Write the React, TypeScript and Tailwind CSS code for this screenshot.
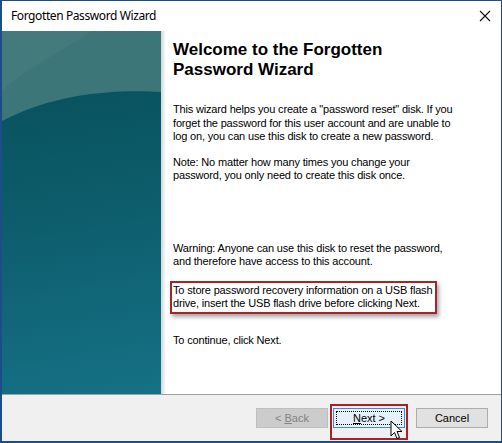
import React from "react";

const body =
  "font-['Liberation_Sans',Arial,sans-serif] text-[11px] tracking-[-0.17px] leading-[13.5px] text-black whitespace-nowrap";

function Panel() {
  return (
    <div className="relative w-[159px] h-[363px] shrink-0 bg-[linear-gradient(170deg,#08505b_10%,#0d5d6c_50%,#157185_100%)]">
      <svg className="absolute left-0 top-0" width="159" height="92" viewBox="0 0 159 92">
        <path d="M0,0 L159,0 L159,61 C130,59 60,58 0,90 Z" fill="#3d7678" />
        <path d="M0,0 L90,0 C60,20 20,40 0,60 Z" fill="#4b8283" opacity="0.45" />
      </svg>
    </div>
  );
}

function Btn({ children, className = "" }: { children: React.ReactNode; className?: string }) {
  return (
    <div
      className={`w-[72px] h-[20px] flex items-center justify-center border font-['Liberation_Sans',Arial,sans-serif] text-[11px] ${className}`}
    >
      {children}
    </div>
  );
}

export default function App() {
  return (
    <div className="w-[502px] h-[443px] bg-[#1d4d89] border-l-2 border-r border-t border-b-2 border-[#1d4d89] flex flex-col overflow-hidden">
      {/* title bar */}
      <div className="h-[30px] bg-white flex items-center justify-between pl-[9px] pr-[10px] shrink-0">
        <span className="font-['Noto_Sans',sans-serif] text-[12px] tracking-[-0.4px] text-black">
          Forgotten Password Wizard
        </span>
        <svg width="12" height="12" viewBox="0 0 12 12">
          <path d="M1,1 L11,11 M11,1 L1,11" stroke="#111" strokeWidth="1.1" />
        </svg>
      </div>
      {/* main */}
      <div className="h-[363px] flex bg-white shrink-0">
        <Panel />
        <div className="w-[5px] shrink-0 bg-gradient-to-r from-[#cfd6d8] to-white" />
        <div className="flex flex-col pl-[7px] pt-[9px]">
          <h1 className="font-['Liberation_Sans',Arial,sans-serif] font-bold text-[17px] leading-[20px] text-black whitespace-nowrap">
            Welcome to the Forgotten
            <br />
            Password Wizard
          </h1>
          <p className={`${body} mt-[23px]`}>
            This wizard helps you create a "password reset" disk. If you
            <br />
            forget the password for this user account and are unable to
            <br />
            log on, you can use this disk to create a new password.
          </p>
          <p className={`${body} mt-[12px]`}>
            Note: No matter how many times you change your
            <br />
            password, you only need to create this disk once.
          </p>
          <p className={`${body} mt-[59px]`}>
            Warning: Anyone can use this disk to reset the password,
            <br />
            and therefore have access to this account.
          </p>
          <div className="mt-[12px] -ml-[3px] w-[267px] border-2 border-[#a3262d] pl-[1px] pt-[1px] pb-[1px] shadow-[2px_3px_4px_rgba(0,0,0,0.35)]">
            <p className={body}>
              To store password recovery information on a USB flash
              <br />
              drive, insert the USB flash drive before clicking Next.
            </p>
          </div>
          <p className={`${body} mt-[20px]`}>To continue, click Next.</p>
        </div>
      </div>
      {/* bottom bar */}
      <div className="flex-1 bg-[#f0f0f0] border-t border-[#a0a0a0] flex justify-end items-start pt-[13px] pr-[13px]">
        <Btn className="bg-[#cccccc] border-[#bfbfbf] text-[#838383]">
          &lt; <span className="underline ml-[3px]">B</span>ack
        </Btn>
        <div className="relative ml-[5px]">
          <Btn className="bg-[#e5f1fb] border-[#3c8bd4] text-black">
            <span className="border border-dotted border-black w-[66px] h-[14px] flex items-center justify-center">
              <span className="underline">N</span>ext &gt;
            </span>
          </Btn>
          <span className="absolute -left-[3px] -top-[4px] w-[78px] h-[36px] border-[2.5px] border-[#b01e25]" />
          <svg className="absolute left-[57px] top-[12px]" width="14" height="21" viewBox="0 0 14 21">
            <path
              d="M1,1 L1,16 L4.5,12.5 L7,18.5 L9.5,17.5 L7,11.5 L12,11.5 Z"
              fill="white"
              stroke="black"
              strokeWidth="1"
            />
          </svg>
        </div>
        <Btn className="ml-[11px] bg-[#e1e1e1] border-[#adadad] text-black">Cancel</Btn>
      </div>
    </div>
  );
}
